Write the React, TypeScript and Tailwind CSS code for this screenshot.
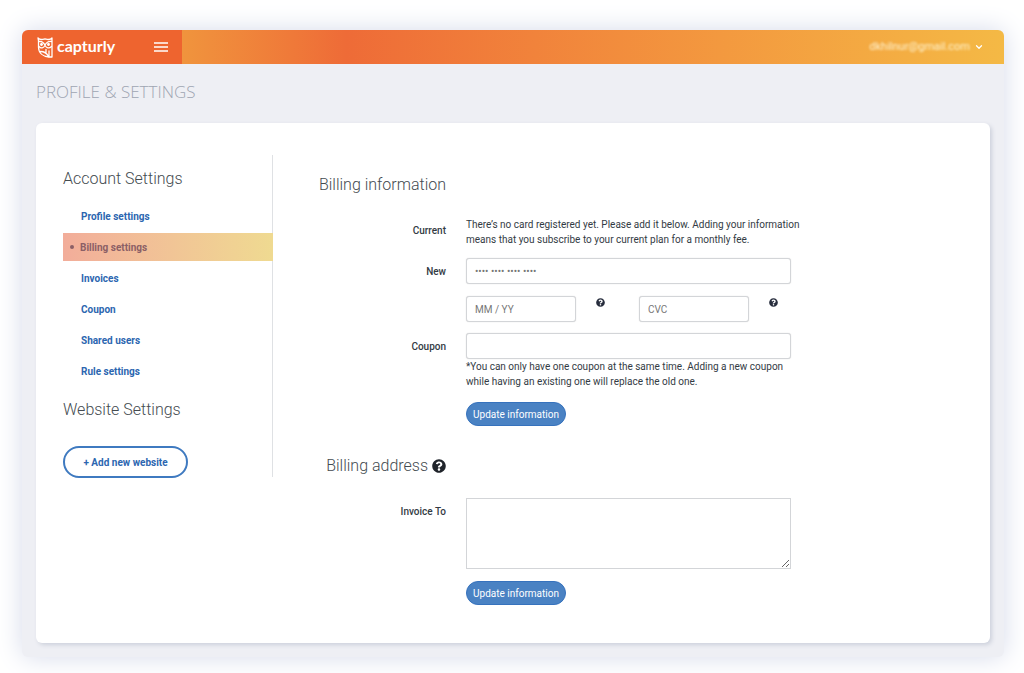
import type { ReactNode } from 'react'
import { FaQuestionCircle } from 'react-icons/fa'
import { ChevronDown } from 'lucide-react'

const NAV_ITEMS = ['Profile settings', 'Billing settings', 'Invoices', 'Coupon', 'Shared users', 'Rule settings']
const ACTIVE_ITEM = 'Billing settings'

const INPUT = 'h-[26px] rounded-[3px] border border-[#d3d5d8] bg-white px-2 text-[10px] text-[#333] placeholder-[#777] shadow-[0_0_1px_#ccc]'

function OwlLogo() {
  return (
    <svg viewBox="0 0 32 42" className="h-[21px] w-4" fill="none" stroke="#fff" strokeWidth="2.6" strokeLinejoin="round" strokeLinecap="round" aria-hidden="true">
      <path d="M2 2 C6 7 11 5 16 4 C21 5 26 7 30 2 L30 40 L24 40 C12 39 3 32 3 20 L3 8 Z" />
      <path d="M4 9 C9 8 13 11 16 16 C19 11 23 8 29 9" />
      <circle cx="9" cy="15" r="1.6" fill="#fff" />
      <circle cx="23" cy="15" r="1.6" fill="#fff" />
      <path d="M4 19 C8 24 13 22 16 17 C19 22 24 24 29 19" />
      <path d="M7 29 C14 29 20 33 23 39 M18 31 L18 25 M24 39 L24 28" />
    </svg>
  )
}

function Header() {
  return (
    <header className="flex h-[34px] text-white">
      <div className="flex w-40 shrink-0 items-center justify-between bg-[#ee642f] pr-[14px] pl-[15px]">
        <a href="#" className="flex items-center gap-1">
          <OwlLogo />
          <span className="pb-[2px] font-[Lato,sans-serif] text-[16px] leading-5 font-bold">capturly</span>
        </a>
        <button type="button" aria-label="Toggle menu" className="flex w-[14px] flex-col gap-[2px]">
          <span className="h-[2px] w-full bg-white/75" />
          <span className="h-[2px] w-full bg-white/75" />
          <span className="h-[2px] w-full bg-white/75" />
        </button>
      </div>
      <div className="flex grow justify-end bg-linear-to-r from-[#f0943d] via-[#ee6b37] via-20% to-[#f4b945]">
        <button type="button" className="flex items-center gap-1 pr-5">
          <span className="text-[11px] text-[#fff3d0] blur-[1px]">dkhilnur@gmail.com</span>
          <ChevronDown className="size-[10px]" strokeWidth={3} />
        </button>
      </div>
    </header>
  )
}

function Sidebar() {
  return (
    <aside className="h-[322px] w-[210px] shrink-0 border-r border-[#dfe1e4]">
      <h2 className="pt-3 text-[16px] leading-6 font-light text-[#444b50]">Account Settings</h2>
      <nav className="mt-[11px] flex flex-col gap-[3px]">
        {NAV_ITEMS.map((item) =>
          item === ACTIVE_ITEM ? (
            <a
              key={item}
              href="#"
              aria-current="page"
              className="-mr-px flex h-7 items-center gap-[6px] bg-linear-to-r from-[#f2ad9a] to-[#efda91] pl-[7px] text-[10px] font-bold text-[#8b5f66]"
            >
              <span className="size-1 rounded-full bg-[#8b5f66]" />
              {item}
            </a>
          ) : (
            <a key={item} href="#" className="flex h-7 items-center pl-[18px] text-[10px] font-bold text-[#2c66b0]">
              {item}
            </a>
          ),
        )}
      </nav>
      <h2 className="mt-[13px] text-[16px] leading-6 font-light text-[#444b50]">Website Settings</h2>
      <button type="button" className="mt-6 h-8 w-[125px] rounded-full border-2 border-[#3f7ac0] text-[10px] font-bold text-[#2c66b0]">
        + Add new website
      </button>
    </aside>
  )
}

interface RowProps {
  label: string
  htmlFor?: string
  children: ReactNode
}

function Row({ label, htmlFor, children }: RowProps) {
  return (
    <div className="flex gap-5">
      <label htmlFor={htmlFor} className="w-32 shrink-0 pt-[6px] text-right leading-[15px] font-medium">
        {label}
      </label>
      <div className="w-[325px]">{children}</div>
    </div>
  )
}

function UpdateButton() {
  return (
    <button type="submit" className="h-6 w-[100px] rounded-full border border-[#3672bd] bg-[#4a82c3] text-[10px] text-white">
      Update information
    </button>
  )
}

function BillingInformation() {
  return (
    <form>
      <h2 className="mb-5 w-32 text-right text-[16px] leading-6 font-light whitespace-nowrap text-[#444b50]">Billing information</h2>
      <div className="flex flex-col gap-[11px]">
        <Row label="Current">
          <p className="-mr-5 leading-[15px]">
            There’s no card registered yet. Please add it below. Adding your information means that you subscribe to your current plan for a monthly fee.
          </p>
        </Row>
        <Row label="New" htmlFor="card">
          <input id="card" placeholder="•••• •••• •••• ••••" className={`${INPUT} w-full`} />
          <div className="mt-3 flex">
            <input aria-label="Expiry date" placeholder="MM / YY" className={`${INPUT} w-[110px]`} />
            <FaQuestionCircle className="mt-[2px] mr-[34px] ml-5 size-[9px] shrink-0 text-[#272d3d]" />
            <input aria-label="CVC" placeholder="CVC" className={`${INPUT} w-[110px]`} />
            <FaQuestionCircle className="mt-[2px] ml-5 size-[9px] shrink-0 text-[#272d3d]" />
          </div>
        </Row>
        <Row label="Coupon" htmlFor="coupon">
          <input id="coupon" className={`${INPUT} w-full`} />
          <p className="mb-[13px] leading-[15px]">
            *You can only have one coupon at the same time. Adding a new coupon while having an existing one will replace the old one.
          </p>
          <UpdateButton />
        </Row>
      </div>
    </form>
  )
}

function BillingAddress() {
  return (
    <form className="mt-7">
      <h2 className="mb-5 flex w-32 items-center justify-end gap-1 text-[16px] leading-6 font-light whitespace-nowrap text-[#444b50]">
        Billing address
        <FaQuestionCircle className="size-[14px] shrink-0 text-[#20242b]" />
      </h2>
      <Row label="Invoice To" htmlFor="invoice-to">
        <textarea id="invoice-to" className="mb-3 block h-[71px] w-full resize-y border border-[#d3d5d8] p-2 text-[10px]" />
        <UpdateButton />
      </Row>
    </form>
  )
}

function App() {
  return (
    <div className="min-h-screen bg-white pt-[30px] pr-5 pb-4 pl-[22px] font-[Roboto,sans-serif] text-[10px] text-[#333b44]">
      <div className="overflow-hidden rounded-md bg-[#eeeff4] shadow-[0_0_26px_#d5daea]">
        <Header />
        <main className="px-[14px] pb-[14px]">
          <h1 className="pt-[13px] pb-4 font-['Open_Sans',sans-serif] text-[17px] leading-[30px] font-light text-[#9ea5b2]">PROFILE &amp; SETTINGS</h1>
          <div className="flex min-h-[520px] gap-[45px] rounded-md bg-white pt-8 pl-[27px] shadow-[2px_2px_4px_#cdd1dc]">
            <Sidebar />
            <div className="pt-[18px]">
              <BillingInformation />
              <BillingAddress />
            </div>
          </div>
        </main>
      </div>
    </div>
  )
}

export default App
